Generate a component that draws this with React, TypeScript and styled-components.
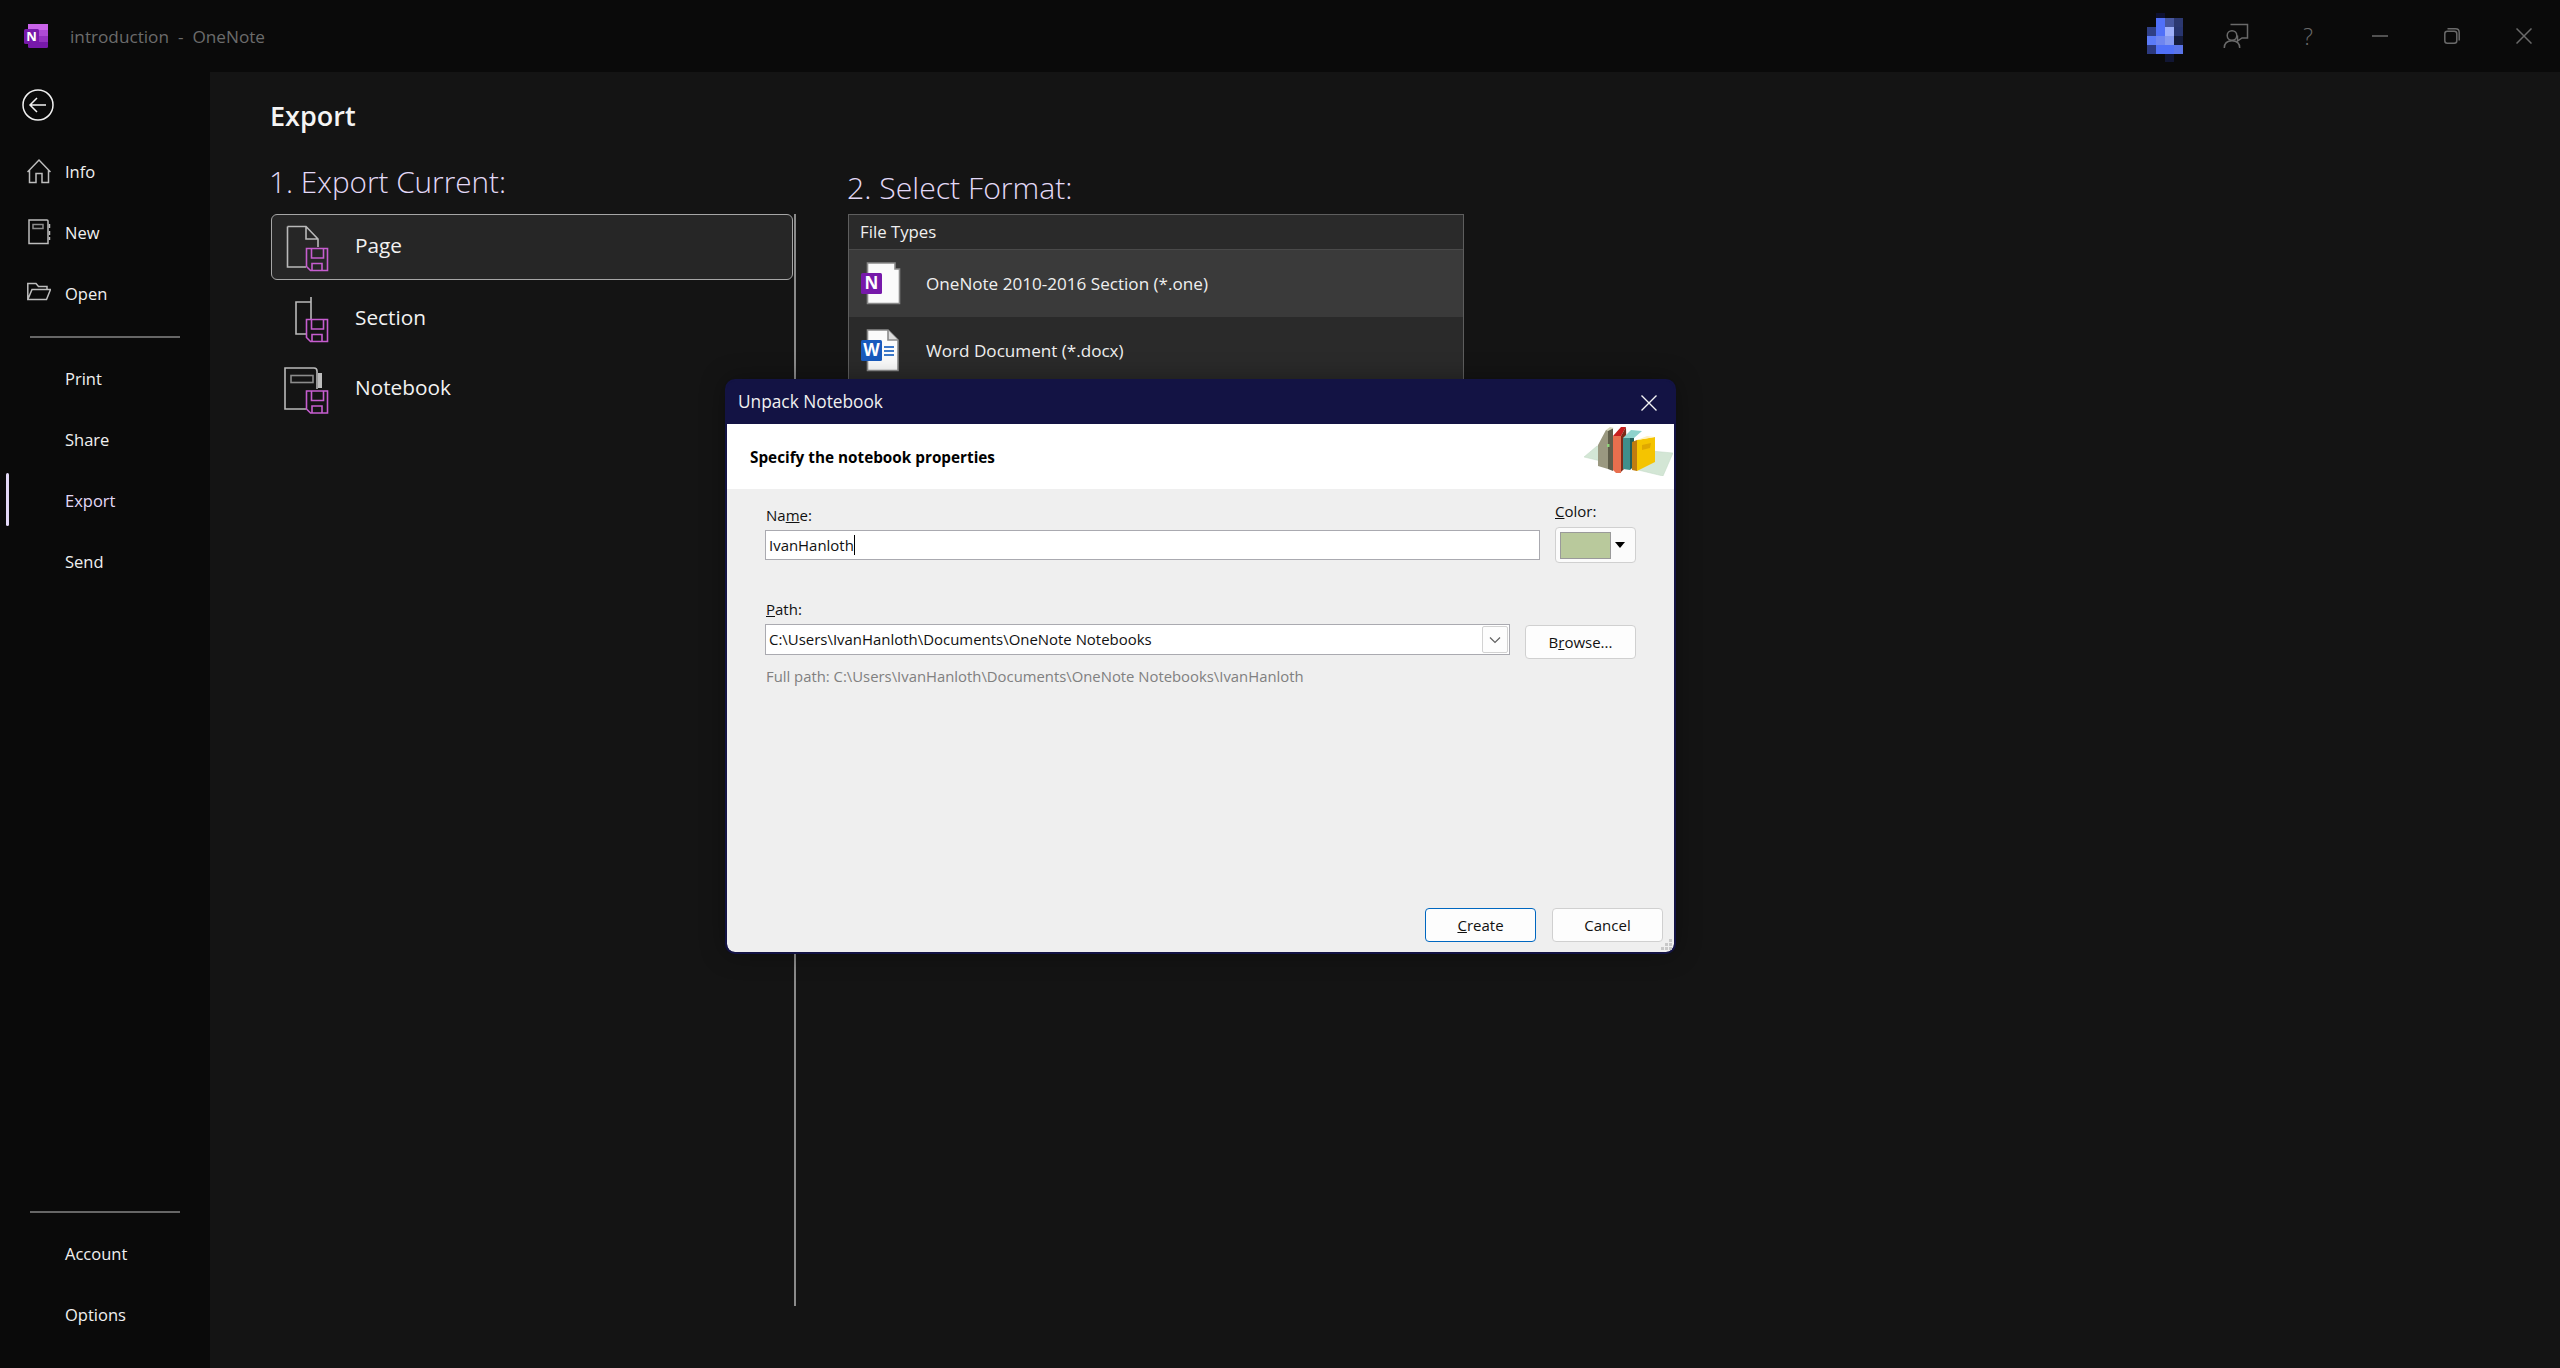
import React from "react";
import styled, { createGlobalStyle } from "styled-components";

const Global = createGlobalStyle`
  html, body { margin: 0; padding: 0; background: #0a0a0a; }
  body { font-family: "Open Sans", "Noto Sans", "Liberation Sans", sans-serif; }
  * { box-sizing: border-box; }
`;

const Page = styled.div`
  position: relative;
  width: 2560px;
  height: 1368px;
  overflow: hidden;
  display: flex;
  flex-direction: column;
  background: #0a0a0a;
`;

/* ---------- title bar ---------- */
const TitleBar = styled.header`
  height: 72px;
  flex: none;
  display: flex;
  align-items: center;
  padding-left: 24px;
`;
const AppLogo = styled.svg`
  width: 24px;
  height: 24px;
  flex: none;
`;
const WindowTitle = styled.div`
  margin-left: 22px;
  font-size: 17.2px;
  color: #6c6c6c;
  white-space: pre;
`;
const ChromeGroup = styled.div`
  margin-left: auto;
  display: flex;
`;
const ChromeSlot = styled.div`
  width: 72px;
  height: 72px;
  display: flex;
  align-items: center;
  justify-content: center;
  color: #6a6a6a;
  font-size: 23px;
  font-weight: 300;
`;

/* ---------- body ---------- */
const Body = styled.div`
  flex: 1;
  display: flex;
  min-height: 0;
`;
const Sidebar = styled.nav`
  width: 210px;
  flex: none;
  display: flex;
  flex-direction: column;
  padding-bottom: 23px;
`;
const BackRow = styled.div`
  height: 69px;
  flex: none;
  padding: 16px 0 0 22px;
`;
const NavItem = styled.div<{ $active?: boolean }>`
  position: relative;
  height: 61px;
  flex: none;
  display: flex;
  align-items: center;
  padding: 0 0 1px 27px;
  gap: 14px;
  font-size: 16.5px;
  color: ${(p) => (p.$active ? "#e3d9f7" : "#f0f0f0")};
`;
const ActiveBar = styled.span`
  position: absolute;
  left: 6px;
  top: 3px;
  width: 3px;
  height: 53px;
  border-radius: 2px;
  background: #e3d9f7;
`;
const NavIconSlot = styled.span`
  width: 24px;
  height: 26px;
  flex: none;
  display: block;
`;
const NavRule = styled.div`
  height: 2px;
  width: 150px;
  flex: none;
  margin: 12px 0 10px 30px;
  background: #666;
`;
const NavRuleBottom = styled(NavRule)`
  margin-top: auto;
`;

const Main = styled.main`
  flex: 1;
  background: #141414;
  padding-left: 60px;
`;
const PageHeading = styled.h1`
  margin: 24px 0 0 0;
  height: 40px;
  line-height: 40px;
  font-size: 27px;
  font-weight: 600;
  color: #f4f4f4;
`;
const Columns = styled.div`
  margin-top: 24px;
  display: flex;
`;
const LeftColumn = styled.section`
  width: 526px;
  flex: none;
`;
const RightColumn = styled.section`
  margin-left: 52px;
  padding-top: 6px;
  width: 616px;
  flex: none;
`;
const SectionTitle = styled.h2<{ $after: number; $size: number }>`
  margin: 0 0 ${(p) => p.$after}px 0;
  height: 44px;
  line-height: 44px;
  font-size: ${(p) => p.$size}px;
  font-weight: 300;
  color: #e3d9f7;
  white-space: nowrap;
  text-indent: -1px;
`;
const ScopeList = styled.div`
  height: 1092px;
  border-right: 2px solid #8a8a8a;
  padding-left: 1px;
`;
const ScopeRow = styled.div<{ $selected?: boolean }>`
  display: flex;
  align-items: center;
  height: ${(p) => (p.$selected ? 66 : 70)}px;
  margin-bottom: ${(p) => (p.$selected ? 2 : 0)}px;
  margin-right: 1px;
  padding-left: ${(p) => (p.$selected ? 8 : 9)}px;
  border-radius: 6px;
  border: ${(p) => (p.$selected ? "1px solid #a6a6a6" : "0")};
  background: ${(p) => (p.$selected ? "#262626" : "transparent")};
  font-size: 20.8px;
  color: #f2f2f2;
`;
const ScopeLabel = styled.span<{ $lift?: number }>`
  padding-bottom: ${(p) => p.$lift ?? 0}px;
`;
const ScopeIcon = styled.svg`
  width: 60px;
  height: 60px;
  flex: none;
  margin-right: 15px;
  fill: none;
  stroke: #b9b9b9;
  stroke-width: 1.6;
`;

const FormatBox = styled.div`
  height: 320px;
  border: 1px solid #5e5e5e;
  background: #2a2a2a;
`;
const FormatHeader = styled.div`
  height: 35px;
  display: flex;
  align-items: center;
  padding: 0 0 2px 11px;
  background: #2a2a2a;
  border-bottom: 1px solid #4a4a4a;
  font-size: 16.8px;
  color: #f0f0f0;
`;
const FormatRow = styled.div<{ $selected?: boolean }>`
  height: 66.5px;
  display: flex;
  align-items: center;
  padding-left: 12px;
  background: ${(p) => (p.$selected ? "#3a3a3a" : "#2a2a2a")};
  font-size: 17.1px;
  color: #efefef;
`;
const FormatLabel = styled.span`
  padding-top: 1px;
`;
const FileIcon = styled.svg`
  width: 40px;
  height: 44px;
  flex: none;
  margin-right: 25px;
`;

/* ---------- dialog ---------- */
const Dialog = styled.div`
  position: absolute;
  left: 725px;
  top: 379px;
  width: 951px;
  height: 575px;
  display: flex;
  flex-direction: column;
  background: #131344;
  border: 2px solid #131344;
  border-radius: 10px;
  box-shadow: 0 0 24px rgba(0, 0, 0, 0.35);
  overflow: hidden;
  color: #000;
`;
const DialogTitleBar = styled.div`
  height: 43px;
  flex: none;
  display: flex;
  align-items: center;
  justify-content: space-between;
  padding: 0 17px 2px 11px;
  color: #f0f0f0;
  font-size: 17.3px;
`;
const CloseGlyph = styled.svg`
  width: 16px;
  height: 16px;
  stroke: #f4f4f4;
  stroke-width: 1.4;
  fill: none;
  margin-top: 2px;
`;
const DialogHeader = styled.div`
  height: 65px;
  flex: none;
  background: #fff;
  display: flex;
  justify-content: space-between;
  padding: 2px 1px 0 23px;
`;
const HeaderText = styled.div`
  align-self: center;
  margin-top: -2px;
  font-size: 15.3px;
  font-weight: 700;
  color: #000;
`;
const BooksArt = styled.svg`
  width: 89px;
  height: 50px;
  flex: none;
`;
const DialogBody = styled.div`
  position: relative;
  flex: 1;
  display: flex;
  flex-direction: column;
  background: #efefef;
  padding: 12px 11px 10px 38px;
  border-radius: 0 0 8px 8px;
`;
const FieldRow = styled.div<{ $gapTop?: number }>`
  display: flex;
  gap: 15px;
  align-items: flex-start;
  margin-top: ${(p) => p.$gapTop ?? 0}px;
`;
const FieldColumn = styled.div<{ $width: number; $pushTop?: number }>`
  width: ${(p) => p.$width}px;
  flex: none;
  margin-top: ${(p) => p.$pushTop ?? 0}px;
`;
const FieldLabel = styled.div<{ $after?: number; $flush?: boolean }>`
  height: 20px;
  line-height: 20px;
  padding-left: ${(p) => (p.$flush ? 0 : 1)}px;
  margin-bottom: ${(p) => p.$after ?? 5}px;
  font-size: 15px;
  color: #111;
`;
const TextBox = styled.div<{ $height: number }>`
  position: relative;
  height: ${(p) => p.$height}px;
  display: flex;
  align-items: center;
  padding: 0 0 1px 3px;
  background: #fff;
  border: 1.5px solid #aaaab0;
  font-size: 14.95px;
  color: #111;
`;
const Caret = styled.span`
  display: inline-block;
  width: 1px;
  height: 20px;
  background: #000;
`;
const ComboArrow = styled.span`
  position: absolute;
  right: 1px;
  top: 1px;
  bottom: 1px;
  width: 26px;
  display: flex;
  align-items: center;
  justify-content: center;
  background: #fdfdfd;
  border: 1px solid #d2d2d2;
  border-radius: 2px;
`;
const ColorButton = styled.div`
  width: 81px;
  height: 36px;
  display: flex;
  align-items: center;
  padding-left: 4px;
  background: #fbfbfb;
  border: 1px solid #d0d0d0;
  border-radius: 4px;
`;
const Swatch = styled.span`
  width: 51px;
  height: 27px;
  flex: none;
  background: #b9c99c;
  border: 1px solid #9a9a9a;
`;
const DropTriangle = styled.span`
  width: 0;
  height: 0;
  margin-left: 4px;
  border-left: 5.5px solid transparent;
  border-right: 5.5px solid transparent;
  border-top: 6px solid #000;
`;
const PushButton = styled.div<{ $primary?: boolean; $topGap?: number }>`
  width: 111px;
  height: 34px;
  flex: none;
  margin-top: ${(p) => p.$topGap ?? 0}px;
  display: flex;
  align-items: center;
  justify-content: center;
  background: #fdfdfd;
  border: ${(p) => (p.$primary ? "1.5px solid #0067c0" : "1px solid #d0d0d0")};
  border-radius: 4px;
  font-size: 15px;
  color: #111;
`;
const FullPath = styled.div`
  margin-top: 7px;
  height: 20px;
  line-height: 20px;
  padding-left: 1px;
  font-size: 14.85px;
  color: #808080;
`;
const ButtonBar = styled.div`
  margin-top: auto;
  display: flex;
  justify-content: flex-end;
  gap: 16px;
`;
const Gripper = styled.svg`
  position: absolute;
  right: 0;
  bottom: 0;
  width: 14px;
  height: 14px;
  fill: #c8c8c8;
`;

/* ---------- drawings ---------- */
const Floppy = ({ dy = 0 }: { dy?: number }) => (
  <g transform={`translate(0 ${dy})`} stroke="#c65dcf">
    <path d="M26.5 31.5H47.5V53.5H30.5L26.5 49.5Z" />
    <path d="M31.5 31.5V41H43.5V31.5" />
    <path d="M32 53.5V46.5H42V53.5" />
  </g>
);

const avatar: [number, number, string][] = [
  [1, 0, "#0d1030"],
  [1, 1, "#5070f8"], [2, 1, "#47579f"], [3, 1, "#2c3870"],
  [0, 2, "#2f3f86"], [1, 2, "#5070f8"], [2, 2, "#9fb0fa"], [3, 2, "#28356f"],
  [0, 3, "#5b7bf8"], [1, 3, "#6f86f0"], [2, 3, "#8599f0"], [3, 3, "#151c3c"],
  [0, 4, "#2c3a80"], [1, 4, "#5070f8"], [2, 4, "#5070f8"], [3, 4, "#5a74e8"],
  [2, 5, "#111634"],
];

const Gray = "#bdbdbd";

const scopeIcons = {
  page: (
    <>
      <path d="M7.5 9.5H26L38 22V30M26 50H7.5V9.5M26 9.5V22H38" />
      <Floppy />
    </>
  ),
  section: (
    <>
      <path d="M31 10V32M31 15H16V47H26" />
      <Floppy dy={1} />
    </>
  ),
  notebook: (
    <>
      <path d="M26 52H5V11H34Q37 11 37 14V32" />
      <rect x="11" y="18.5" width="22" height="7" stroke="#8c8c8c" />
      <rect x="38" y="16" width="4" height="15" fill="#bdbdbd" stroke="none" />
      <Floppy dy={2.5} />
    </>
  ),
};

const navUpper = [
  {
    label: "Info",
    icon: (
      <svg width="24" height="26" fill="none" stroke={Gray} strokeWidth="1.5">
        <path d="M0.5 14L12 2L23.5 14M2.5 12V24.5H9V15.5H15V24.5H21.5V12" />
      </svg>
    ),
  },
  {
    label: "New",
    icon: (
      <svg width="24" height="26" fill="none" stroke={Gray} strokeWidth="1.5">
        <path d="M2 1H20Q21 1 21 2V24.5H2Z" />
        <rect x="6" y="5.5" width="10" height="4" stroke="#8c8c8c" />
        <path d="M22.5 5V9M22.5 12V16M22.5 18V21" />
      </svg>
    ),
  },
  {
    label: "Open",
    icon: (
      <svg width="24" height="26" fill="none" stroke={Gray} strokeWidth="1.5">
        <path d="M0.8 19V3.5H9L11.5 6.5H20V9.5M0.8 19.5L5 9.5H23.5L19.5 19.5Z" />
      </svg>
    ),
  },
];

export default function App() {
  return (
    <Page>
      <Global />
      <TitleBar>
        <AppLogo viewBox="0 0 24 24">
          <rect x="4" y="0" width="20" height="24" rx="1.5" fill="#7719aa" />
          <rect x="4" y="0" width="20" height="6" fill="#ca64ea" />
          <rect x="12" y="6" width="12" height="6" fill="#ae4bd5" />
          <rect x="12" y="12" width="12" height="6" fill="#9332bf" />
          <rect x="0" y="5" width="15" height="15" rx="1.5" fill="#7719aa" />
          <text x="7.5" y="17" textAnchor="middle" fontSize="13" fontWeight="700" fill="#fff" fontFamily="Open Sans">
            N
          </text>
        </AppLogo>
        <WindowTitle>introduction  -  OneNote</WindowTitle>
        <ChromeGroup>
          <ChromeSlot>
            <svg width="72" height="72" shapeRendering="crispEdges">
              {avatar.map(([c, r, f], i) => (
                <rect key={i} x={19 + c * 9} y={r === 0 ? 13 : 9 + r * 9} width="9" height={r === 0 ? 5 : r === 5 ? 8 : 9} fill={f} />
              ))}
            </svg>
          </ChromeSlot>
          <ChromeSlot>
            <svg width="28" height="30" fill="none" stroke="#6a6a6a" strokeWidth="1.5">
              <circle cx="10" cy="14.5" r="4.8" />
              <path d="M2.3 27C2.3 22 5.5 19.7 10 19.7S17.7 22 17.7 27" />
              <path d="M8.5 3.5H25.5V17H20L15.5 20V14.5" />
            </svg>
          </ChromeSlot>
          <ChromeSlot>?</ChromeSlot>
          <ChromeSlot>
            <svg width="16" height="2" stroke="#6a6a6a" strokeWidth="1.5">
              <path d="M0 1H16" />
            </svg>
          </ChromeSlot>
          <ChromeSlot>
            <svg width="16" height="16" fill="none" stroke="#6a6a6a" strokeWidth="1.5">
              <rect x="0.8" y="3.2" width="12" height="12" rx="2.5" />
              <path d="M3.5 0.8H11.5Q15.2 0.8 15.2 4.5V12.5" />
            </svg>
          </ChromeSlot>
          <ChromeSlot>
            <svg width="16" height="16" stroke="#6a6a6a" strokeWidth="1.5">
              <path d="M0.5 0.5L15.5 15.5M15.5 0.5L0.5 15.5" />
            </svg>
          </ChromeSlot>
        </ChromeGroup>
      </TitleBar>
      <Body>
        <Sidebar>
          <BackRow>
            <svg width="32" height="36" fill="none" stroke="#f2f2f2" strokeWidth="1.5">
              <circle cx="16" cy="17" r="15" />
              <path d="M24 17H8M15 10L8 17L15 24" />
            </svg>
          </BackRow>
          {navUpper.map((n) => (
            <NavItem key={n.label}>
              <NavIconSlot>{n.icon}</NavIconSlot>
              {n.label}
            </NavItem>
          ))}
          <NavRule />
          <NavItem><NavIconSlot />Print</NavItem>
          <NavItem><NavIconSlot />Share</NavItem>
          <NavItem $active>
            <ActiveBar />
            <NavIconSlot />
            Export
          </NavItem>
          <NavItem><NavIconSlot />Send</NavItem>
          <NavRuleBottom />
          <NavItem><NavIconSlot />Account</NavItem>
          <NavItem><NavIconSlot />Options</NavItem>
        </Sidebar>
        <Main>
          <PageHeading>Export</PageHeading>
          <Columns>
            <LeftColumn>
              <SectionTitle $after={10} $size={29.7}>1. Export Current:</SectionTitle>
              <ScopeList>
                <ScopeRow $selected>
                  <ScopeIcon viewBox="0 0 60 60">{scopeIcons.page}</ScopeIcon>
                  <ScopeLabel $lift={4}>Page</ScopeLabel>
                </ScopeRow>
                <ScopeRow>
                  <ScopeIcon viewBox="0 0 60 60">{scopeIcons.section}</ScopeIcon>
                  <ScopeLabel $lift={1}>Section</ScopeLabel>
                </ScopeRow>
                <ScopeRow>
                  <ScopeIcon viewBox="0 0 60 60">{scopeIcons.notebook}</ScopeIcon>
                  <ScopeLabel>Notebook</ScopeLabel>
                </ScopeRow>
              </ScopeList>
            </LeftColumn>
            <RightColumn>
              <SectionTitle $after={4} $size={30.2}>2. Select Format:</SectionTitle>
              <FormatBox>
                <FormatHeader>File Types</FormatHeader>
                <FormatRow $selected>
                  <FileIcon viewBox="0 0 40 44">
                    <path d="M6.5 2H34V8H38.5V42.5H6.5Z" fill="#fbfbfb" stroke="#8a8a8a" strokeWidth="1.6" />
                    <rect x="0" y="12" width="21" height="21" rx="1.5" fill="#7719aa" />
                    <text x="10.5" y="28" textAnchor="middle" fontSize="17" fontWeight="700" fill="#fff" fontFamily="Open Sans">N</text>
                  </FileIcon>
                  <FormatLabel>OneNote 2010-2016 Section (*.one)</FormatLabel>
                </FormatRow>
                <FormatRow>
                  <FileIcon viewBox="0 0 40 44">
                    <path d="M6.5 2H27L37 12V42.5H6.5Z" fill="#fbfbfb" stroke="#8a8a8a" strokeWidth="1.6" />
                    <path d="M27 2V12H37" fill="#dcdcdc" stroke="#8a8a8a" strokeWidth="1.6" />
                    <path d="M23 19H33M23 23H33M23 27H33" stroke="#3c78c8" strokeWidth="1.8" />
                    <rect x="0" y="12" width="21" height="21" rx="1.5" fill="#185abd" />
                    <text x="10.5" y="28" textAnchor="middle" fontSize="17" fontWeight="700" fill="#fff" fontFamily="Open Sans">W</text>
                  </FileIcon>
                  <FormatLabel>Word Document (*.docx)</FormatLabel>
                </FormatRow>
              </FormatBox>
            </RightColumn>
          </Columns>
        </Main>
      </Body>

      <Dialog>
        <DialogTitleBar>
          Unpack Notebook
          <CloseGlyph viewBox="0 0 16 16">
            <path d="M0.5 0.5L15.5 15.5M15.5 0.5L0.5 15.5" />
          </CloseGlyph>
        </DialogTitleBar>
        <DialogHeader>
          <HeaderText>Specify the notebook properties</HeaderText>
          <BooksArt viewBox="0 0 89 50">
            <polygon points="0,31 13,20 89,27 79,50" fill="#d3e6d5" stroke="#c0d8c4" strokeWidth="0.5" />
            <polygon points="14,19 22,4 24,4 24,43 14,40" fill="#9a9880" />
            <polygon points="24,4 29,2 29,45 24,43" fill="#5f5d4a" />
            <polygon points="22,4 26,1 30,2 24,5" fill="#d8d8bc" />
            <rect x="23" y="18" width="2.5" height="3" fill="#8fd07a" />
            <polygon points="29,10 37,10 37,47 32,47 29,44" fill="#e86f4e" />
            <polygon points="29,10 37,1 42,1 37,10" fill="#c81e1e" />
            <polygon points="37,10 42,1 43,40 37,46" fill="#7d2a18" />
            <polygon points="39,12 46,12 46,44 39,43" fill="#3f8f8c" />
            <polygon points="39,12 47,4 58,5 50,12" fill="#8ed2cc" />
            <polygon points="46,12 50,12 50,40 46,44" fill="#225f5c" />
            <polygon points="48,16 53,14 53,45 48,44" fill="#c07c10" />
            <polygon points="53,14 71,11 71,36 53,45" fill="#f5c400" />
            <polygon points="48,16 63,10 71,11 53,14" fill="#fff2c0" />
            <polygon points="58,19 67,17 66,22 58,24" fill="#e0a800" />
          </BooksArt>
        </DialogHeader>
        <DialogBody>
          <FieldRow>
            <FieldColumn $width={775} $pushTop={4}>
              <FieldLabel>Na<u>m</u>e:</FieldLabel>
              <TextBox $height={30}>IvanHanloth<Caret /></TextBox>
            </FieldColumn>
            <FieldColumn $width={81}>
              <FieldLabel $after={6} $flush><u>C</u>olor:</FieldLabel>
              <ColorButton>
                <Swatch />
                <DropTriangle />
              </ColorButton>
            </FieldColumn>
          </FieldRow>
          <FieldRow $gapTop={36}>
            <FieldColumn $width={745}>
              <FieldLabel><u>P</u>ath:</FieldLabel>
              <TextBox $height={31}>
                C:\Users\IvanHanloth\Documents\OneNote Notebooks
                <ComboArrow>
                  <svg width="12" height="8" fill="none" stroke="#606060" strokeWidth="1.2">
                    <path d="M1 1.5L6 6.5L11 1.5" />
                  </svg>
                </ComboArrow>
              </TextBox>
            </FieldColumn>
            <PushButton $topGap={26}>B<u>r</u>owse...</PushButton>
          </FieldRow>
          <FullPath>Full path: C:\Users\IvanHanloth\Documents\OneNote Notebooks\IvanHanloth</FullPath>
          <ButtonBar>
            <PushButton $primary><u>C</u>reate</PushButton>
            <PushButton>Cancel</PushButton>
          </ButtonBar>
          <Gripper viewBox="0 0 14 14">
            <rect x="9" y="1" width="3" height="3" />
            <rect x="5" y="5" width="3" height="3" />
            <rect x="9" y="5" width="3" height="3" />
            <rect x="1" y="9" width="3" height="3" />
            <rect x="5" y="9" width="3" height="3" />
            <rect x="9" y="9" width="3" height="3" />
          </Gripper>
        </DialogBody>
      </Dialog>
    </Page>
  );
}
